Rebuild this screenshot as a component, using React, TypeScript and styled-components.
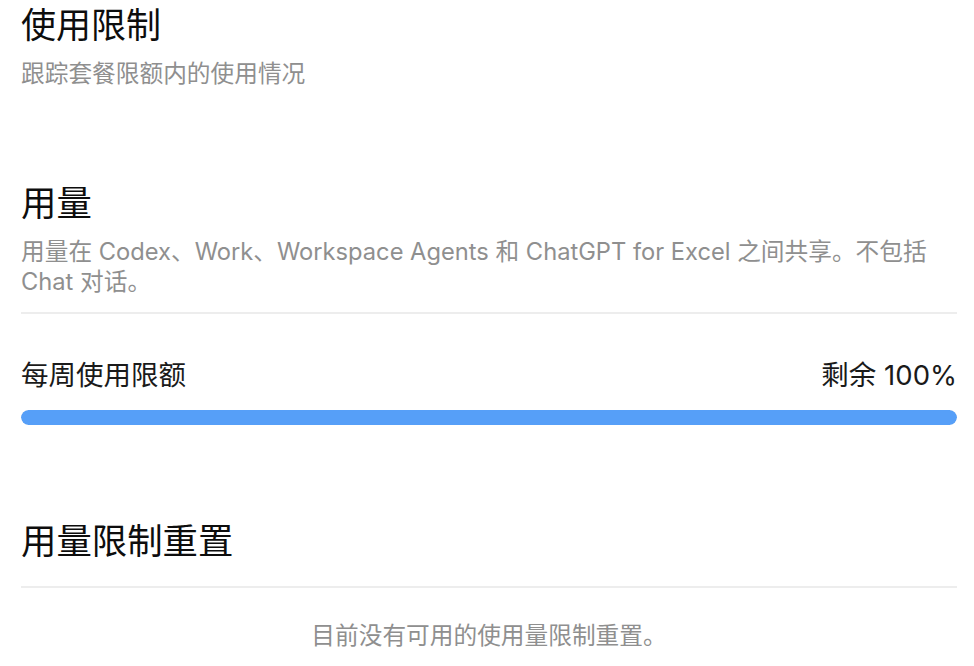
import * as React from "react";
import styled, { createGlobalStyle } from "styled-components";

const GlobalStyle = createGlobalStyle`
  html, body {
    margin: 0;
    padding: 0;
    background: #ffffff;
  }
  body {
    font-family: "Inter", "Noto Sans CJK SC", sans-serif;
    -webkit-font-smoothing: antialiased;
  }
`;

const Page = styled.div`
  width: 936px;
  padding: 5px 17px 0 21px;
  display: flex;
  flex-direction: column;
`;

const Section = styled.section<{ $gap?: number }>`
  display: flex;
  flex-direction: column;
  margin-top: ${(p) => p.$gap ?? 0}px;
`;

const PageTitle = styled.h1`
  margin: 0;
  font-size: 35px;
  line-height: 40px;
  font-weight: 400;
  color: #0d0d0d;
`;

const SectionTitle = styled.h2`
  margin: 0;
  font-size: 35.4px;
  line-height: 40px;
  font-weight: 400;
  color: #0d0d0d;
`;

const Muted = styled.p<{ $top?: number }>`
  margin: ${(p) => p.$top ?? 0}px 0 0;
  font-size: 23.7px;
  line-height: 30px;
  color: #8f8f8f;
`;

const Divider = styled.hr<{ $top: number }>`
  margin: ${(p) => p.$top}px 0 0;
  border: none;
  height: 2px;
  background: #ededed;
`;

const LimitRow = styled.div`
  margin-top: 44px;
  display: flex;
  justify-content: space-between;
  align-items: center;
  font-size: 27.5px;
  line-height: 34px;
  color: #1a1a1a;
`;

const Track = styled.div`
  margin-top: 18px;
  height: 15px;
  border-radius: 8px;
  background: #ececec;
  overflow: hidden;
`;

const Fill = styled.div`
  height: 100%;
  border-radius: 8px;
  background: #569ff8;
`;

const Empty = styled.p`
  margin: 33px 0 0;
  text-align: center;
  font-size: 23.7px;
  line-height: 30px;
  color: #8f8f8f;
`;

export default function App() {
  const remaining = 100;
  return (
    <>
      <GlobalStyle />
      <Page>
        <Section>
          <PageTitle>使用限制</PageTitle>
          <Muted $top={14}>跟踪套餐限额内的使用情况</Muted>
        </Section>

        <Section $gap={95}>
          <SectionTitle>用量</SectionTitle>
          <Muted $top={13}>
            用量在 Codex、Work、Workspace Agents 和 ChatGPT for Excel 之间共享。不包括 Chat 对话。
          </Muted>
          <Divider $top={15} />
          <LimitRow>
            <span>每周使用限额</span>
            <span>剩余 {remaining}%</span>
          </LimitRow>
          <Track>
            <Fill style={{ width: `${remaining}%` }} />
          </Track>
        </Section>

        <Section $gap={97}>
          <SectionTitle>用量限制重置</SectionTitle>
          <Divider $top={24} />
          <Empty>目前没有可用的使用量限制重置。</Empty>
        </Section>
      </Page>
    </>
  );
}
